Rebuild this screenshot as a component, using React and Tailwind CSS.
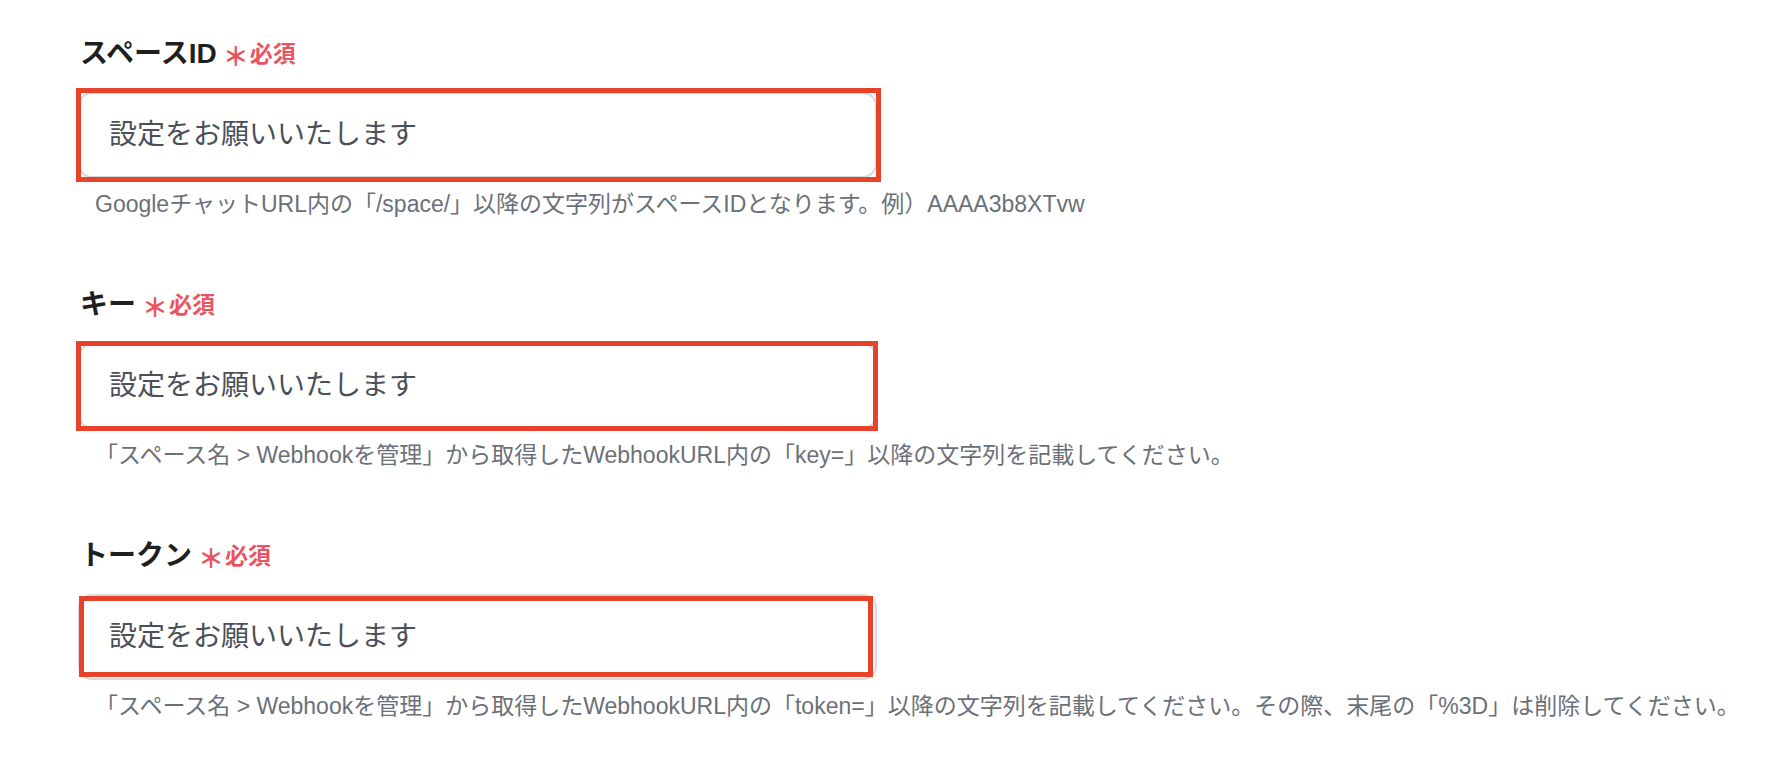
import React from 'react';

const fields = [
  {
    label: 'スペースID',
    help: 'GoogleチャットURL内の「/space/」以降の文字列がスペースIDとなります。例）AAAA3b8XTvw',
    mark: 'left-[-2px] top-[-4px] w-[805px] h-[94px]',
  },
  {
    label: 'キー',
    help: '「スペース名 > Webhookを管理」から取得したWebhookURL内の「key=」以降の文字列を記載してください。',
    mark: 'left-[-2px] top-[-2px] w-[802px] h-[90px]',
  },
  {
    label: 'トークン',
    help: '「スペース名 > Webhookを管理」から取得したWebhookURL内の「token=」以降の文字列を記載してください。その際、末尾の「%3D」は削除してください。',
    mark: 'left-[1px] top-[2px] w-[794px] h-[81px]',
  },
];

function Field({ label, help, mark }) {
  return (
    <div className="flex flex-col">
      <div className="flex items-center h-[32px] pl-[2px]">
        <span className="text-[28px] font-bold text-[#1f1f1f] leading-[32px]">{label}</span>
        <span className="ml-[6px] text-[26px] font-bold text-[#ea5461] leading-[32px] translate-y-[3px]">＊</span>
        <span className="ml-[1px] text-[23px] font-bold text-[#ea5461] leading-[32px]">必須</span>
      </div>
      <div className="relative mt-[22px] w-[799px]">
        <input
          readOnly
          placeholder="設定をお願いいたします"
          className="w-full h-[86px] rounded-[14px] border-2 border-[#d6d9de] bg-white pl-[29px] text-[28px] text-[#4b5058] placeholder:text-[#4b5058] outline-none"
        />
        <div className={`absolute ${mark} border-[5px] border-[#e8432a] pointer-events-none`} />
      </div>
      <p className="mt-[11px] pl-[17px] text-[23px] leading-[30px] text-[#6b7078] whitespace-nowrap">{help}</p>
    </div>
  );
}

export default function App() {
  return (
    <div
      className="w-[1780px] h-[758px] bg-white pl-[78px] pt-[38px] flex flex-col gap-[70px] overflow-hidden"
      style={{ fontFamily: '"Liberation Sans", "Noto Sans CJK JP", sans-serif' }}
    >
      {fields.map((f) => (
        <Field key={f.label} {...f} />
      ))}
    </div>
  );
}
